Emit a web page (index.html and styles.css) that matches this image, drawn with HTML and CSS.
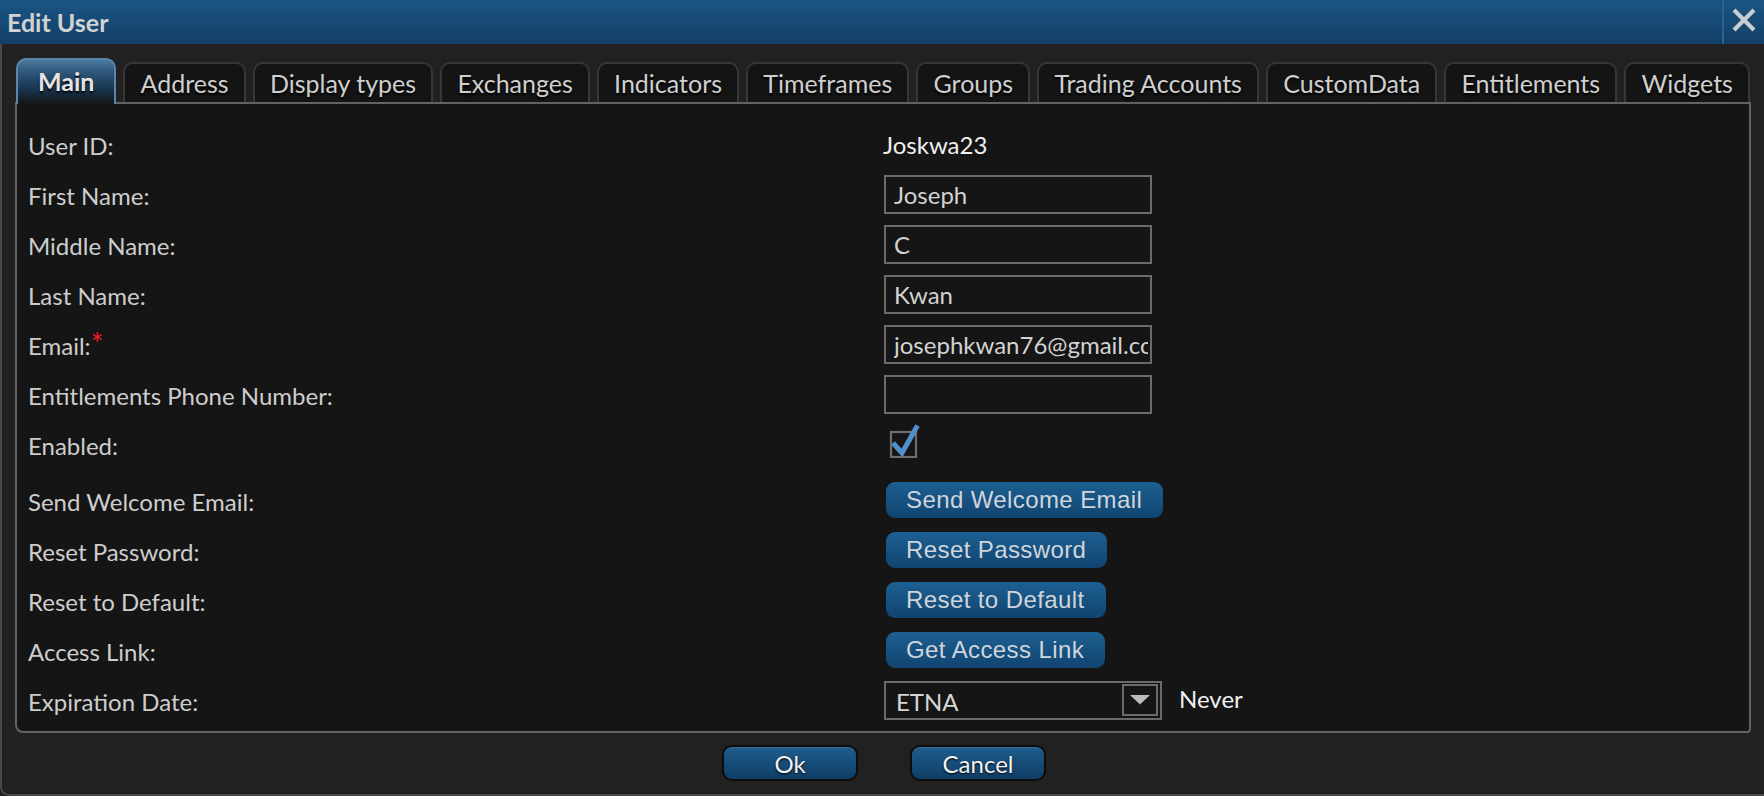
FILE: index.html
```html
<!DOCTYPE html>
<html lang="en">
<head>
<meta charset="utf-8">
<title>Edit User</title>
<link rel="stylesheet" href="styles.css">
</head>
<body>
<div class="window">
  <header class="titlebar">
    <span class="title">Edit User</span>
    <button class="close" aria-label="Close">
      <svg width="24" height="24" viewBox="0 0 24 24"><path d="M2 2 L22 22 M22 2 L2 22" stroke="#c9cdd1" stroke-width="4.2" fill="none"/></svg>
    </button>
  </header>
  <div class="body">
    <nav class="tabs">
      <div class="tab active">Main</div>
      <div class="tab">Address</div>
      <div class="tab">Display types</div>
      <div class="tab">Exchanges</div>
      <div class="tab">Indicators</div>
      <div class="tab">Timeframes</div>
      <div class="tab">Groups</div>
      <div class="tab">Trading Accounts</div>
      <div class="tab">CustomData</div>
      <div class="tab">Entitlements</div>
      <div class="tab">Widgets</div>
    </nav>
    <section class="panel">
      <div class="row"><span class="label">User ID:</span><span class="value">Joskwa23</span></div>
      <div class="row"><span class="label">First Name:</span><input class="input" type="text" value="Joseph"></div>
      <div class="row"><span class="label">Middle Name:</span><input class="input" type="text" value="C"></div>
      <div class="row"><span class="label">Last Name:</span><input class="input" type="text" value="Kwan"></div>
      <div class="row"><span class="label">Email:<span class="req">*</span></span><input class="input" type="text" value="josephkwan76@gmail.com"></div>
      <div class="row"><span class="label">Entitlements Phone Number:</span><input class="input" type="text" value=""></div>
      <div class="row row-gap"><span class="label">Enabled:</span>
        <span class="checkbox">
          <svg width="32" height="36" viewBox="0 0 32 36">
            <rect x="3" y="10" width="25" height="25" fill="none" stroke="#6e6e6e" stroke-width="2.2"/>
            <path d="M5 21 L14 31 L29.5 3.5" fill="none" stroke="#4f8fcc" stroke-width="5"/>
          </svg>
        </span>
      </div>
      <div class="row"><span class="label">Send Welcome Email:</span><button class="btn">Send Welcome Email</button></div>
      <div class="row"><span class="label">Reset Password:</span><button class="btn">Reset Password</button></div>
      <div class="row"><span class="label">Reset to Default:</span><button class="btn">Reset to Default</button></div>
      <div class="row"><span class="label">Access Link:</span><button class="btn">Get Access Link</button></div>
      <div class="row"><span class="label">Expiration Date:</span>
        <div class="select">
          <span class="select-text">ETNA</span>
          <span class="select-arrow"><svg width="20" height="10" viewBox="0 0 20 10"><path d="M0 0 H20 L10 9.5 Z" fill="#b9bdbd"/></svg></span>
        </div>
        <span class="never">Never</span>
      </div>
    </section>
    <footer class="footer">
      <button class="dlg-btn">Ok</button>
      <button class="dlg-btn">Cancel</button>
    </footer>
  </div>
</div>
</body>
</html>
```

FILE: styles.css
```css
* { box-sizing: border-box; }
html, body { margin: 0; padding: 0; }
body {
  width: 1764px;
  height: 796px;
  overflow: hidden;
  background: #212121;
  font-family: "Lato", "Open Sans", sans-serif;
  color: #cfcfcf;
}
.window {
  height: 796px;
  display: flex;
  flex-direction: column;
}
.titlebar {
  height: 44px;
  flex: none;
  display: flex;
  align-items: center;
  background: linear-gradient(#1b5584, #123f66);
}
.title {
  flex: 1;
  padding-left: 7px;
  font-size: 25px;
  font-weight: 700;
  color: #d2d2d2;
}
.close {
  width: 42px;
  height: 44px;
  border: 0;
  border-left: 2px solid #2a6291;
  background: transparent;
  display: flex;
  align-items: center;
  justify-content: center;
  padding: 0 0 5px 0;
}
.body {
  flex: 1;
  border-left: 2px solid #484848;
  border-bottom: 2px solid #484848;
  border-bottom-left-radius: 9px;
}
.tabs {
  display: flex;
  align-items: flex-end;
  gap: 7px;
  margin: 14px 0 0 14px;
  width: 1734px;
  height: 44px;
  position: relative;
  z-index: 1;
}
.tab {
  flex: 1 1 auto;
  height: 40px;
  padding: 0 12px;
  display: flex;
  align-items: center;
  justify-content: center;
  background: #141414;
  border: 2px solid #373737;
  border-bottom: 0;
  border-radius: 10px 10px 0 0;
  font-size: 25px;
  color: #cfcfcf;
  text-shadow: 0 2px 2px #000;
  white-space: nowrap;
}
.tab.active {
  flex: 0 0 auto;
  height: 46px;
  margin-bottom: -2px;
  padding: 0 20px 2px;
  background: linear-gradient(#4b7aa1 0%, #2c5476 30%, #16324a 70%, #151515 100%);
  border-color: #5a86ab;
  font-weight: 700;
  color: #e4e4e4;
}
.panel {
  margin-left: 13px;
  width: 1736px;
  height: 631px;
  border: 2px solid #626262;
  border-radius: 0 0 4px 8px;
  background: #151515;
  padding: 15px 0 6px 11px;
}
.row {
  display: flex;
  align-items: center;
  height: 50px;
}
.row-gap { margin-bottom: 6px; }
.label {
  width: 856px;
  flex: none;
  font-size: 24px;
  color: #cdcdcd;
  padding-top: 3px;
}
.req {
  color: #ee1c24;
  font-size: 30px;
  line-height: 0;
}
.value {
  font-size: 24px;
  color: #f0f0f0;
  margin-left: -1px;
}
.input {
  width: 268px;
  height: 39px;
  border: 2px solid #6b6b6b;
  background: #151515;
  color: #d2d2d2;
  font: 24px "Lato", "Open Sans", sans-serif;
  padding: 0 2px 0 8px;
  outline: none;
  margin: 0;
}
.checkbox {
  display: flex;
  margin-left: 4px;
  margin-top: -8px;
}
.btn {
  height: 36px;
  padding: 0 21px 0 20px;
  border: 0;
  border-radius: 9px;
  background: linear-gradient(#1d6092, #104470);
  color: #cfd5da;
  font: 24px "Liberation Sans", Arial, sans-serif;
  letter-spacing: 0.4px;
  margin-left: 2px;
}
.select {
  width: 278px;
  height: 39px;
  border: 2px solid #6b6b6b;
  display: flex;
  align-items: center;
  padding: 0 2px 0 10px;
  font-size: 24px;
  color: #d6d6d6;
}
.select-text { flex: 1; padding-top: 2px; }
.select-arrow {
  width: 36px;
  height: 32px;
  border: 2px solid #6b6b6b;
  display: flex;
  align-items: center;
  justify-content: center;
}
.never {
  margin-left: 17px;
  font-size: 24px;
  color: #f0f0f0;
  padding-bottom: 3px;
}
.footer {
  display: flex;
  justify-content: center;
  gap: 52px;
  padding: 12px 0 0 2px;
}
.dlg-btn {
  width: 136px;
  height: 36px;
  border: 2px solid #0c0c0c;
  border-radius: 10px;
  background: linear-gradient(#1e5c8c, #0f3e66);
  color: #f2f2f2;
  font: 24px "Lato", "Open Sans", sans-serif;
  text-shadow: 0 1px 2px #000;
  box-shadow: inset 0 1px 0 rgba(255,255,255,0.12);
  padding: 0;
}
```
